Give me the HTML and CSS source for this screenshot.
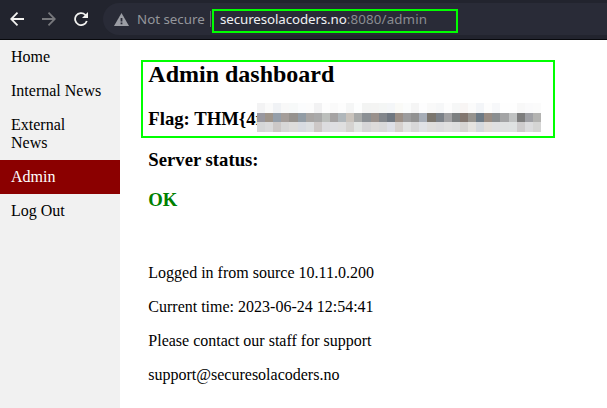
FILE: index.html
```
<!DOCTYPE html>
<html lang="en">
<head>
<meta charset="utf-8">
<title>Admin dashboard</title>
<link rel="stylesheet" href="styles.css">
</head>
<body>
<header class="toolbar">
  <nav class="controls">
    <svg class="icon" viewBox="0 0 14 14"><path d="M14 7H1.5M7.5 .7 1.2 7l6.3 6.3"/></svg>
    <svg class="icon dim" viewBox="0 0 14 14"><path d="M0 7h12.5M6.5 .7 12.8 7l-6.3 6.3"/></svg>
    <svg class="icon" viewBox="0 0 14 14"><path d="M12.8 9A6 6 0 1 1 11.3 2.8L12.5 4"/><path class="solid" d="M14 0V6H8z"/></svg>
  </nav>
  <div class="omnibox">
    <svg class="warning" viewBox="0 0 15 13"><path d="M7.5 0 15 13H0z"/><path class="mark" d="M6.6 5h1.8v3.4H6.6zM6.6 9.5h1.8v1.8H6.6z"/></svg>
    <span class="security">Not secure</span>
    <span class="divider"></span>
    <span class="url"><span class="host">securesolacoders.no</span>:8080/admin</span>
  </div>
</header>
<div class="page">
  <nav class="sidebar">
    <a>Home</a>
    <a>Internal News</a>
    <a>External News</a>
    <a class="active">Admin</a>
    <a>Log Out</a>
  </nav>
  <main>
    <section class="flagged">
      <h2>Admin dashboard</h2>
      <h3>Flag: THM{4r</h3>
      <div class="mosaic" id="mosaic"></div>
    </section>
    <h3>Server status:</h3>
    <h3 class="ok">OK</h3>
    <br>
    <p>Logged in from source 10.11.0.200</p>
    <p>Current time: 2023-06-24 12:54:41</p>
    <p>Please contact our staff for support</p>
    <p>support@securesolacoders.no</p>
  </main>
</div>
<script src="mosaic.js"></script>
</body>
</html>
```
FILE: styles.css
```
* { box-sizing: border-box; }
body {
  margin: 0;
  height: 408px;
  overflow: hidden;
  background: #fff;
  color: #000;
  font: 16px/18px "Liberation Serif", serif;
}
.toolbar {
  display: flex;
  height: 40px;
  padding-top: 3px;
  background: #22242e;
  border-bottom: 1px solid #08090d;
}
.controls {
  display: flex;
  align-items: center;
  gap: 18px;
  width: 103px;
  height: 32px;
  padding-left: 10px;
}
.icon {
  width: 14px;
  height: 14px;
  fill: none;
  stroke: #f2f2f0;
  stroke-width: 1.8;
}
.icon.dim { stroke: #77787c; }
.icon .solid { fill: #f2f2f0; stroke: none; }
.omnibox {
  flex: 1;
  display: flex;
  align-items: center;
  height: 32px;
  padding-left: 11px;
  background: #292b37;
  border-radius: 16px 0 0 16px;
  color: #94969b;
  font: 13.33px/20px "Noto Sans", sans-serif;
  white-space: nowrap;
}
.warning { width: 15px; height: 13px; margin-right: 8px; fill: #9b9da4; }
.warning .mark { fill: #292b37; }
.security { width: 73px; }
.divider { width: 1px; height: 16px; background: #686a72; }
.url {
  display: flex;
  width: 246px;
  height: 24px;
  margin: 4px 0 0 1px;
  padding-left: 6px;
  border: 2px solid #0f0;
  color: #898b91;
  line-height: 16px;
  letter-spacing: .15px;
}
.host { color: #eff0f2; letter-spacing: -.1px; }
.page { display: flex; height: 368px; }
.sidebar {
  display: flex;
  flex-direction: column;
  width: 120px;
  background: #f1f1f1;
}
.sidebar a { padding: 8px 16px 8px 11px; }
.sidebar a.active { background: #8b0000; color: #fff; }
main { flex: 1; padding: 20px 0 0 28.3px; }
h2 { margin: 0; font-size: 24px; line-height: 28px; }
h3 { margin: 19px 0 0; font-size: 18.72px; line-height: 21px; }
.flagged {
  position: relative;
  width: 414px;
  height: 78px;
  margin-left: -7.3px;
  padding-left: 5.3px;
  border: 2px solid #0f0;
}
.flagged h2 { margin-top: -2px; }
.flagged + h3 { margin-top: 11px; }
.flagged h3 { margin-top: 20px; }
.mosaic {
  position: absolute;
  left: 114px;
  top: 41px;
  display: grid;
  grid-template: 10px 9px 10px / repeat(35, 1fr);
  width: 284px;
}
.ok { color: #008000; }
p { margin: 16px 0 0; }
.ok + br { line-height: 18px; }
.ok + br + p { margin-top: 36px; }
```
FILE: mosaic.js
```
const rows = [
  "f3f3f4 fafafa f0f2f5 f8f8f8 f7f9f9 fbfcfd fcfcfc f2f2f3 fdfdfd fafafa fdfdfd f5f6f6 fdfefe f3f4f3 f4f4f3 f4f6f5 f4f6f8 fafaf7 fbfcfc f5f5f5 fdfdfe f9f9f9 f6f7f8 fdfdfd f6f7f7 f8f5f4 fbfbfb f3f5f8 fdfdfd f7f8fa fefefe fefefe f8f8f8 fafafb fbfbfb",
  "98979f 9e948a 949ea9 a49d99 96928e 929ca5 a8a5a3 a9a9a9 bcbfbc a5a3a3 b0b7bb c9c3bc a8aaa9 8b9094 9a918c 82868b 6f7780 9b8f86 9c9c9d 929292 a6adb7 7b766e 7b8188 a1a1a3 7c7f80 82766f 96938e 6d7a85 988c83 8a8e90 a3a4a5 c0c2c2 7d7d7d 9fa0a5 b3b3b1",
  "d5d6d7 dadadb ccc8c7 d7d7d7 dddcdb d8dbe1 dddfe1 cdc8c7 dcdcdf dedfe2 dfdfdf d5d3d0 e2e5e3 d6d6d7 dddbda d9d9da dddfe6 d6d1ce e2e3e3 d8d8d9 e0e2e6 dfdedd dcdcde e0e0e0 dddede d7d5d3 e5e3e0 d5d9de e3dfdb dfe0e2 dfe1e1 dfe2e2 cecccd dcdcde d5d5d4"
];
const mosaic = document.getElementById("mosaic");
for (const row of rows) {
  for (const color of row.split(" ")) {
    const cell = document.createElement("i");
    cell.style.background = "#" + color;
    mosaic.append(cell);
  }
}
```
